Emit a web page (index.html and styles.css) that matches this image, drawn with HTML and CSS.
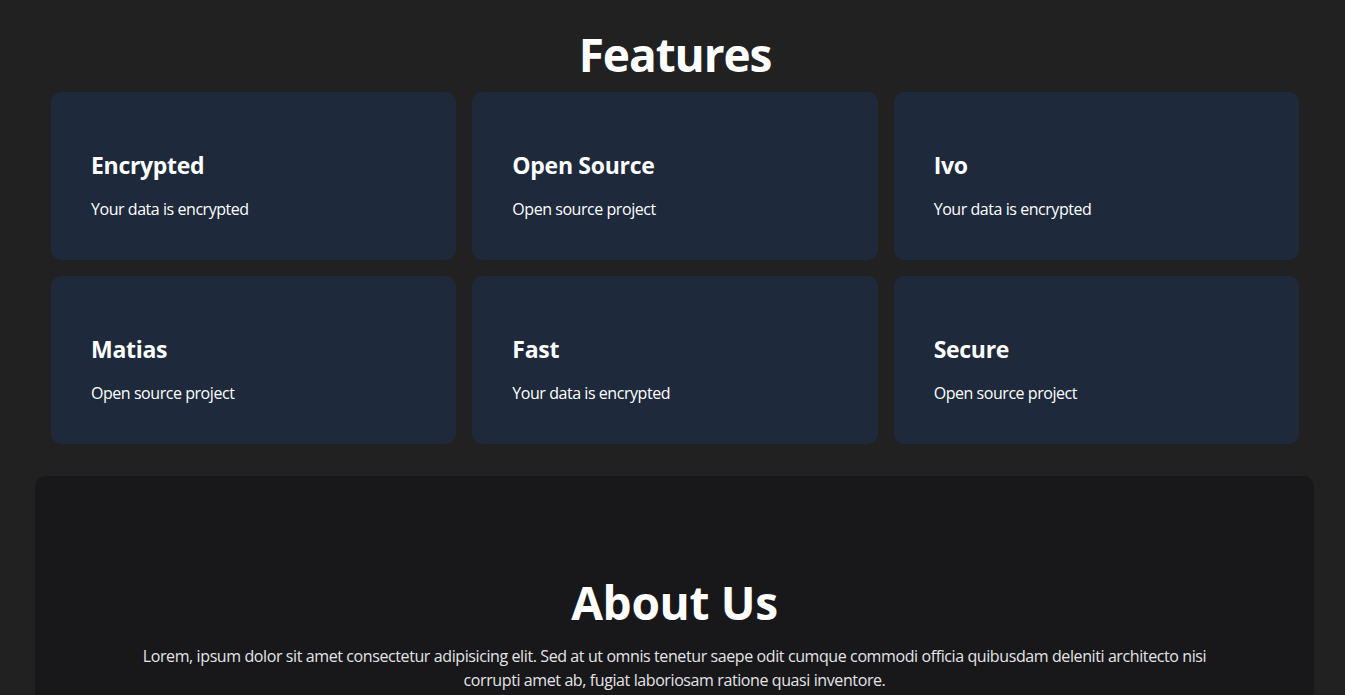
FILE: index.html
```html
<!DOCTYPE html>
<html lang="en">
<head>
<meta charset="utf-8">
<title>Features</title>
<link rel="stylesheet" href="styles.css">
</head>
<body>
<section class="features">
  <h1 class="title features-title">Features</h1>
  <div class="grid">
    <div class="card"><h3>Encrypted</h3><p>Your data is encrypted</p></div>
    <div class="card"><h3>Open Source</h3><p>Open source project</p></div>
    <div class="card"><h3>Ivo</h3><p>Your data is encrypted</p></div>
    <div class="card"><h3>Matias</h3><p>Open source project</p></div>
    <div class="card"><h3>Fast</h3><p>Your data is encrypted</p></div>
    <div class="card"><h3>Secure</h3><p>Open source project</p></div>
  </div>
</section>
<section class="about">
  <h1 class="title">About Us</h1>
  <p>Lorem, ipsum dolor sit amet consectetur adipisicing elit. Sed at ut omnis tenetur saepe odit cumque commodi officia quibusdam deleniti architecto nisi corrupti amet ab, fugiat laboriosam ratione quasi inventore.</p>
</section>
</body>
</html>
```
FILE: styles.css
```css
* { box-sizing: border-box; }
html, body { margin: 0; padding: 0; }
body {
  background: #212121;
  color: #ffffff;
  font-family: "Open Sans", "Noto Sans", sans-serif;
  overflow: hidden;
  height: 695px;
}
.features {
  padding-top: 26px;
  padding-left: 5px;
  display: flex;
  flex-direction: column;
  align-items: center;
}
.title {
  margin: 0;
  font-size: 46px;
  font-weight: 700;
  line-height: 56px;
  letter-spacing: -0.3px;
}
.features-title {
  letter-spacing: -1.1px;
}
.grid {
  margin-top: 10px;
  width: 1248px;
  display: grid;
  grid-template-columns: repeat(3, 1fr);
  gap: 16px;
}
.card {
  background: #1e293b;
  border-radius: 10px;
  height: 168px;
  padding: 57px 40px 0;
}
.card h3 {
  margin: 0;
  font-size: 23px;
  line-height: 32px;
  font-weight: 700;
  letter-spacing: -0.3px;
}
.card p {
  margin: 16px 0 0;
  font-size: 16px;
  line-height: 24px;
  letter-spacing: -0.45px;
}
.about {
  margin: 32px 31px 0 35px;
  background: #18181b;
  border-radius: 10px;
  padding: 98px 96px 40px;
  text-align: center;
}
.about p {
  margin: 14px 0 0;
  font-size: 16px;
  line-height: 24px;
  color: #e4e4e7;
  letter-spacing: -0.4px;
}
```
